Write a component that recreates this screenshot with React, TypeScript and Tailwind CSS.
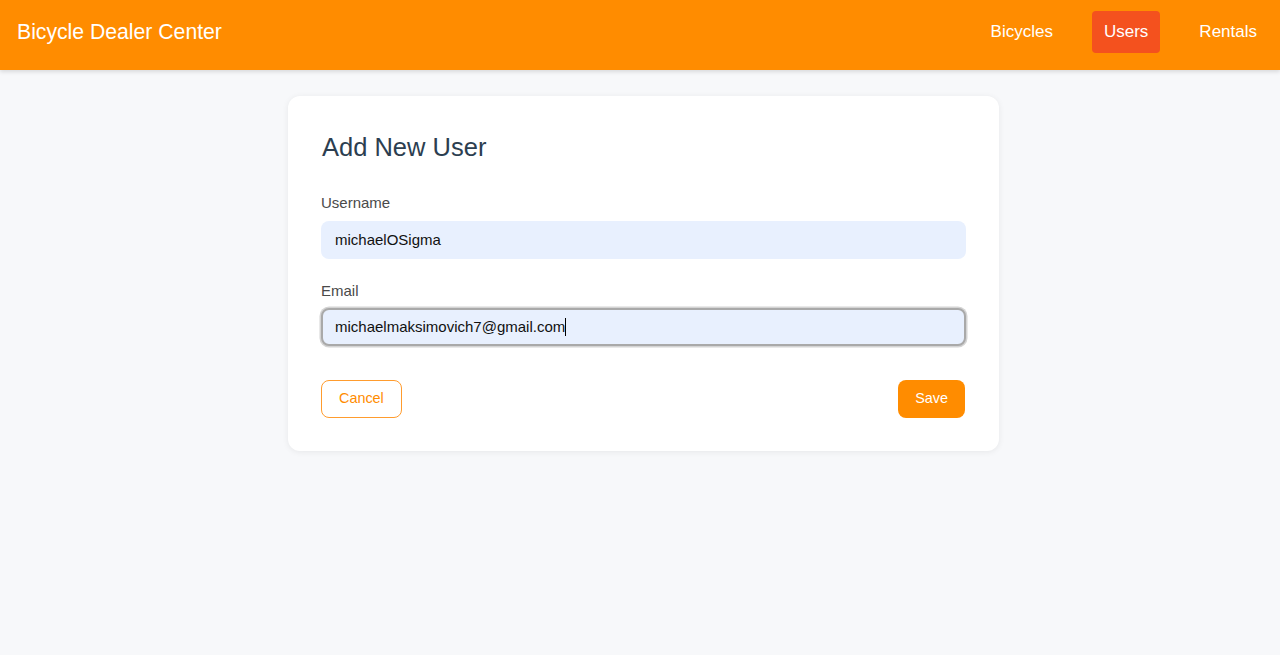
import React from "react";

const font = { fontFamily: '"Liberation Sans", Arial, sans-serif' };

const NavLink = ({ label, active = false }: { label: string; active?: boolean }) => (
  <a
    href="#"
    className={`px-3 h-[42px] flex items-center rounded text-[17px] text-white ${
      active ? "bg-[#f4511e]" : ""
    }`}
  >
    {label}
  </a>
);

export default function App() {
  return (
    <div style={font} className="min-h-[655px] bg-[#f7f8fa]">
      {/* Top bar */}
      <header className="h-[70px] bg-[#ff8c00] flex items-center justify-between pl-4 pr-[11px] pb-[6px] shadow-[0_2px_4px_rgba(0,0,0,0.12)] relative">
        <h1 className="text-[21.2px] text-white ml-px">Bicycle Dealer Center</h1>
        <nav className="flex items-center gap-[27px]">
          <NavLink label="Bicycles" />
          <NavLink label="Users" active />
          <NavLink label="Rentals" />
        </nav>
      </header>

      {/* Form card */}
      <main className="flex justify-center pt-[26px] pl-[7px]">
        <div className="w-[711px] bg-white rounded-xl shadow-[0_1px_6px_rgba(0,0,0,0.07)] px-[33px] pt-[36px] pb-[33px]">
          <h2 className="text-[25.5px] leading-[31px] text-[#2c3e50] mb-[31px] ml-px">Add New User</h2>

          <div className="mb-[23px]">
            <label className="block text-[15px] leading-[18px] text-[#4a4a4a] mb-[9px]">Username</label>
            <div className="h-[38px] rounded-lg bg-[#e8f0fe] flex items-center px-[14px] text-[15px] text-[#111]">
              michaelOSigma
            </div>
          </div>

          <div className="mb-[34px]">
            <label className="block text-[15px] leading-[18px] text-[#4a4a4a] mb-[8px]">Email</label>
            <div className="h-[38px] rounded-lg bg-[#e8f0fe] flex items-center px-[12px] text-[15px] text-[#111] border-2 border-[#a9a9a9] shadow-[0_0_0_1.5px_#d4d4d4]">
              michaelmaksimovich7@gmail.com
              <span className="inline-block w-px h-[18px] bg-black" />
            </div>
          </div>

          <div className="flex justify-between">
            <button className="h-[38px] px-[17px] rounded-lg border border-[#ff9c2e] bg-white text-[#ff8c00] text-[14.4px]">
              Cancel
            </button>
            <button className="h-[38px] px-[17px] rounded-lg bg-[#ff8c00] text-white text-[14.4px] mr-px">
              Save
            </button>
          </div>
        </div>
      </main>
    </div>
  );
}
